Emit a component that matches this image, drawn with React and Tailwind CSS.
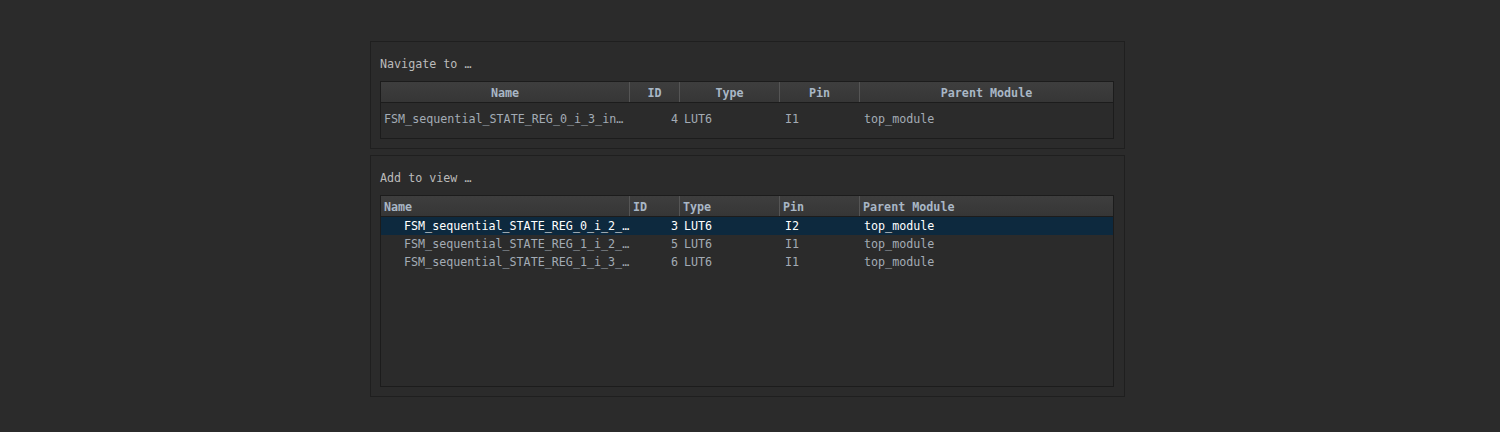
import React from "react";

const mono = { fontFamily: '"DejaVu Sans Mono", "Liberation Mono", monospace' };

const cols = [
  { key: "name", label: "Name", w: "w-[249px]" },
  { key: "id", label: "ID", w: "w-[50px]" },
  { key: "type", label: "Type", w: "w-[100px]" },
  { key: "pin", label: "Pin", w: "w-[80px]" },
  { key: "parent", label: "Parent Module", w: "flex-1" },
];

const HeaderRow = ({ centered }) => (
  <div className="flex h-[21px] border-b border-[#1c1c1c] bg-gradient-to-b from-[#3e3e3e] to-[#363636] font-bold text-[#a9b7c6]">
    {cols.map((c, i) => (
      <div
        key={c.key}
        className={`${c.w} flex items-center px-[3px] pt-px ${centered ? "justify-center" : ""} ${
          i < cols.length - 1 ? "border-r border-[#555555]" : ""
        }`}
      >
        {c.label}
      </div>
    ))}
  </div>
);

const DataRow = ({ row, selected, indent, tall }) => (
  <div
    className={`flex ${tall ? "h-[32px]" : "h-[18px]"} items-center ${
      selected ? "bg-[#0d293e] text-white" : "text-[#a3abb5]"
    }`}
  >
    <div className={`w-[249px] whitespace-nowrap overflow-hidden ${indent ? "pl-[23px]" : "pl-[3px]"}`}>{row.name}</div>
    <div className="w-[50px] text-right pr-[2px]">{row.id}</div>
    <div className="w-[100px] pl-[4px]">{row.type}</div>
    <div className="w-[80px] pl-[5px]">{row.pin}</div>
    <div className="flex-1 pl-[4px]">{row.parent}</div>
  </div>
);

const navRows = [
  { name: "FSM_sequential_STATE_REG_0_i_3_in…", id: 4, type: "LUT6", pin: "I1", parent: "top_module" },
];

const addRows = [
  { name: "FSM_sequential_STATE_REG_0_i_2_…", id: 3, type: "LUT6", pin: "I2", parent: "top_module" },
  { name: "FSM_sequential_STATE_REG_1_i_2_…", id: 5, type: "LUT6", pin: "I1", parent: "top_module" },
  { name: "FSM_sequential_STATE_REG_1_i_3_…", id: 6, type: "LUT6", pin: "I1", parent: "top_module" },
];

export default function App() {
  return (
    <div className="w-[1500px] h-[432px] bg-[#2b2b2b] text-[11.7px] leading-[16px] pt-[41px]" style={mono}>
      <div className="w-[755px] ml-[370px] flex flex-col gap-[6px]">
        {/* Navigate panel */}
        <div className="border border-[#1f1f1f] h-[108px] pl-[9px] pr-[10px] pt-[14px]">
          <div className="text-[#bbbbbb] h-[16px] mb-[9px]">Navigate to …</div>
          <div className="border border-[#1c1c1c] h-[58px]">
            <HeaderRow centered />
            {navRows.map((r, i) => (
              <DataRow key={i} row={r} tall />
            ))}
          </div>
        </div>

        {/* Add to view panel */}
        <div className="border border-[#1f1f1f] h-[242px] pl-[9px] pr-[10px] pt-[14px]">
          <div className="text-[#bbbbbb] h-[16px] mb-[9px]">Add to view …</div>
          <div className="border border-[#1c1c1c] h-[192px]">
            <HeaderRow />
            {addRows.map((r, i) => (
              <DataRow key={i} row={r} selected={i === 0} indent />
            ))}
          </div>
        </div>
      </div>
    </div>
  );
}
